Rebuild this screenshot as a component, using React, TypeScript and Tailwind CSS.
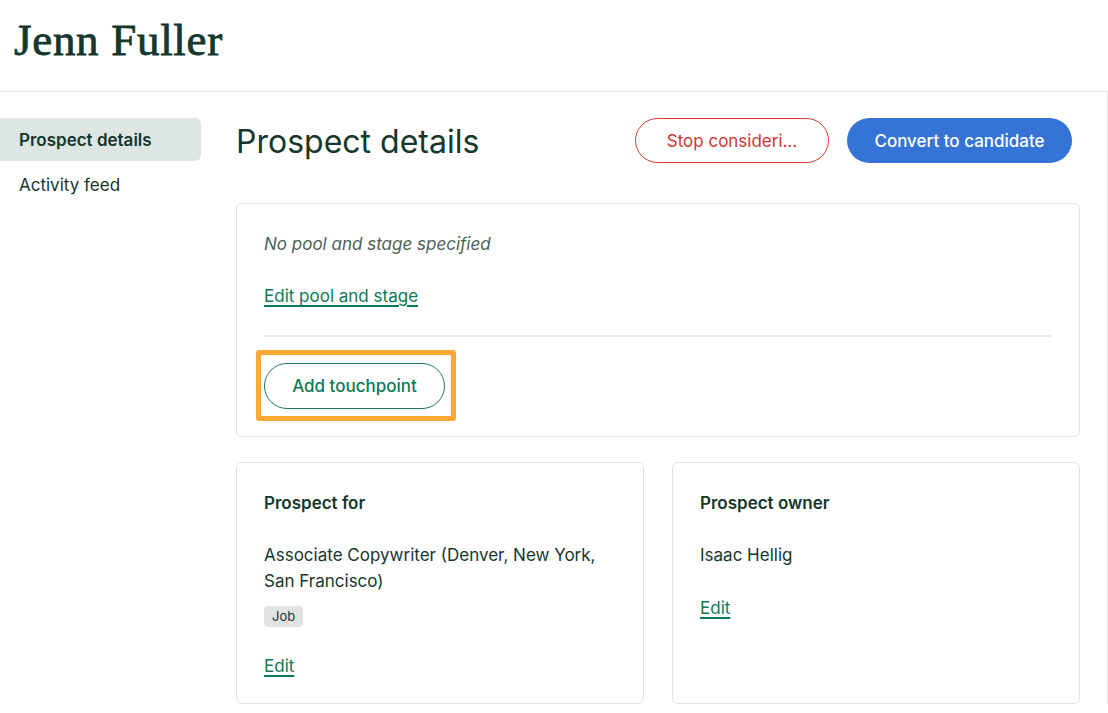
const sans = "font-['Inter',sans-serif]";

function Card({ children, className = "" }: { children: React.ReactNode; className?: string }) {
  return (
    <div className={`rounded-md border border-[#e1e3e2] bg-white px-[27px] ${className}`}>
      {children}
    </div>
  );
}

function EditLink({ children }: { children: React.ReactNode }) {
  return (
    <a href="#" className="text-[17px] leading-[26px] text-[#0b7a58] underline underline-offset-[3px] decoration-[1.5px]">
      {children}
    </a>
  );
}

export default function App() {
  return (
    <div className={`min-h-[713px] w-[1108px] bg-white text-[#15372c] ${sans}`}>
      {/* Header */}
      <header className="h-[92px] border-b border-[#e6e8e7] pl-[14px] pt-[14px]">
        <h1 className="font-['Liberation_Serif',serif] text-[45px] leading-[52px] tracking-[0.7px] [-webkit-text-stroke:0.8px_#15372c]">
          Jenn Fuller
        </h1>
      </header>

      <div className="flex border-r border-[#e6e8e7] pt-[26px]">
        {/* Sidebar */}
        <nav className="flex w-[201px] shrink-0 flex-col">
          <a href="#" className="flex h-[43px] items-center rounded-r-md bg-[#dee6e3] pl-[19px] pt-[3px] text-[17px] font-semibold">
            Prospect details
          </a>
          <a href="#" className="flex h-[48px] items-center pl-[19px] pt-[2px] text-[17px]">
            Activity feed
          </a>
        </nav>

        {/* Main */}
        <main className="ml-[35px] mr-[27px] flex-1">
          <div className="flex h-[45px] items-center justify-between">
            <h2 className="pt-[3px] text-[32px] leading-[40px]">Prospect details</h2>
            <div className="flex gap-[18px] pr-[8px]">
              <button className="h-[45px] w-[194px] rounded-full border border-[#d7372f] pt-[2px] text-[17px] text-[#d0342c]">
                Stop consideri…
              </button>
              <button className="h-[45px] w-[225px] rounded-full bg-[#3574d6] pt-[2px] text-[17px] font-medium text-white">
                Convert to candidate
              </button>
            </div>
          </div>

          <Card className="mt-[40px] pb-[27px] pt-[27px]">
            <p className="text-[17px] italic leading-[26px] text-[#4b5f58]">No pool and stage specified</p>
            <div className="mt-[26px]">
              <EditLink>Edit pool and stage</EditLink>
            </div>
            <div className="mt-[26px] h-[2px] bg-[#ececec]" />
            <div className="relative mt-[26px] w-fit">
              <span className="pointer-events-none absolute -bottom-[12px] -left-[8px] -right-[11px] -top-[13px] rounded-[3px] border-[5px] border-[#ffa733]" />
              <button className="h-[46px] w-[181px] rounded-full border border-[#1f7a5a] pt-[1px] text-[17px] font-medium text-[#0b7a58]">
                Add touchpoint
              </button>
            </div>
          </Card>

          <div className="mt-[25px] grid grid-cols-2 gap-[28px]">
            <Card className="h-[242px] pt-[27px]">
              <h3 className="text-[17px] font-semibold leading-[26px]">Prospect for</h3>
              <p className="mt-[26px] text-[17px] leading-[26px]">
                Associate Copywriter (Denver, New York,
                <br />
                San Francisco)
              </p>
              <span className="mt-[12px] inline-flex h-[21px] items-center rounded-[4px] bg-[#e2e4e3] px-[8px] text-[13px]">
                Job
              </span>
              <div className="mt-[26px]">
                <EditLink>Edit</EditLink>
              </div>
            </Card>
            <Card className="h-[242px] pt-[27px]">
              <h3 className="text-[17px] font-semibold leading-[26px]">Prospect owner</h3>
              <p className="mt-[26px] text-[17px] leading-[26px]">Isaac Hellig</p>
              <div className="mt-[27px]">
                <EditLink>Edit</EditLink>
              </div>
            </Card>
          </div>
        </main>
      </div>
    </div>
  );
}
